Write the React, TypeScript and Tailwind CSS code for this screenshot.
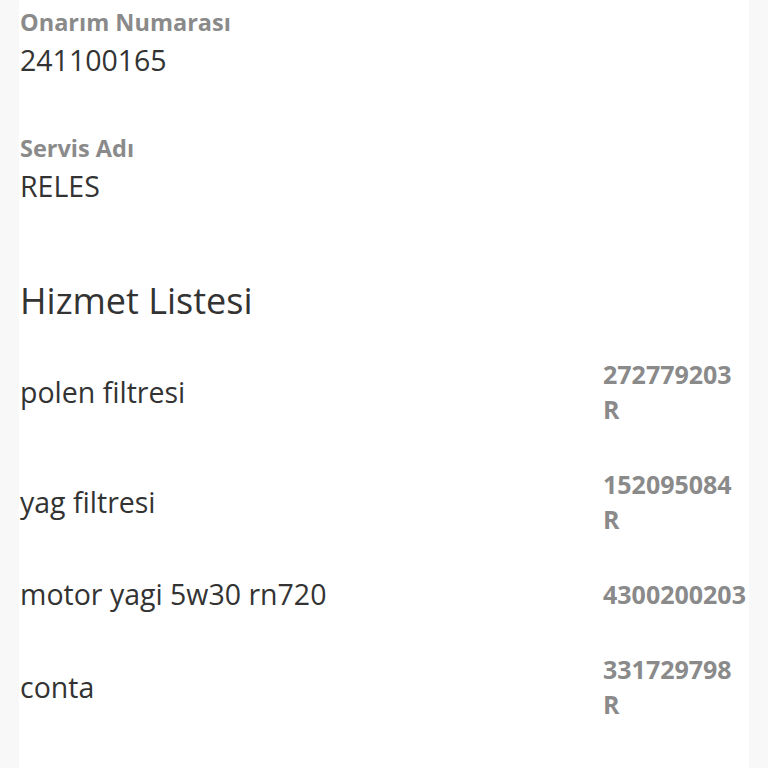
const items = [
  { name: "polen filtresi", code: "272779203 R" },
  { name: "yag filtresi", code: "152095084 R" },
  { name: "motor yagi 5w30 rn720", code: "4300200203" },
  { name: "conta", code: "331729798 R" },
];

function Field({ label, value }: { label: string; value: string }) {
  return (
    <div>
      <div className="text-[23.5px] leading-[28px] font-bold text-[#8a8a8a]">{label}</div>
      <div className="mt-[6px] text-[28.5px] leading-[36px] text-[#333333]">{value}</div>
    </div>
  );
}

export default function App() {
  return (
    <div
      className="min-h-[768px] bg-[#f8f8f8] px-[19px]"
      style={{ fontFamily: '"Open Sans", "Noto Sans", sans-serif' }}
    >
      <div className="min-h-[768px] bg-white pl-px pt-2">
        <Field label="Onarım Numarası" value="241100165" />
        <div className="mt-[56px]">
          <Field label="Servis Adı" value="RELES" />
        </div>

        <h2 className="mt-[75px] text-[36px] leading-[44px] text-[#333333]">Hizmet Listesi</h2>

        <div className="mt-[14px]">
          {items.map((item) => (
            <div key={item.name} className="flex items-center py-5">
              <div className="flex-1 text-[28.5px] leading-[35px] text-[#333333]">{item.name}</div>
              <div className="w-[146px] text-[25px] leading-[35px] font-bold text-[#8a8a8a]">
                {item.code}
              </div>
            </div>
          ))}
        </div>
      </div>
    </div>
  );
}
